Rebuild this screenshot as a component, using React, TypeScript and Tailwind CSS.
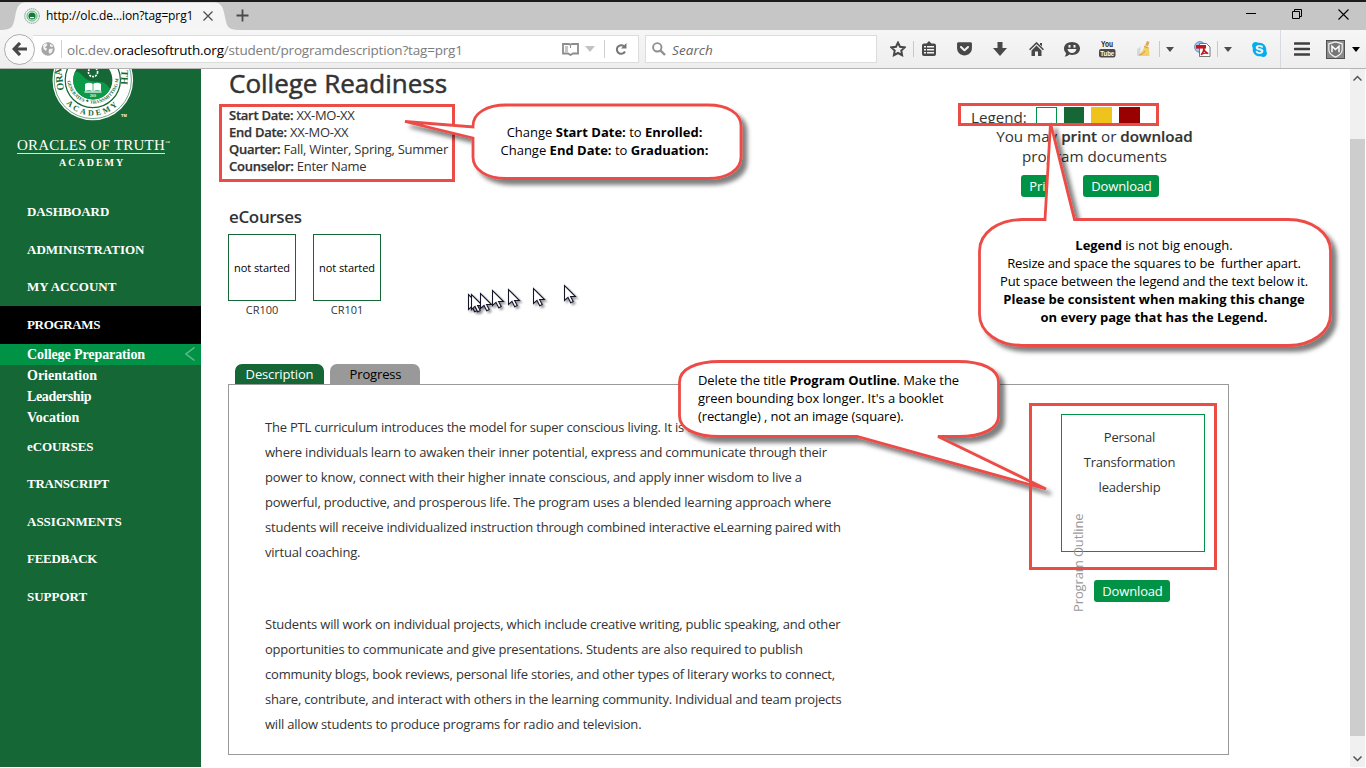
import React from "react";
import { FaGetPocket, FaSkype } from "react-icons/fa";

const RED = "#ec4c46";

function Seal() {
  return (
    <svg width="90" height="54" viewBox="48 69 90 54" className="block">
      <defs>
        <path id="arcBottom" d="M57.300 80 A35.500 35.500 0 0 0 128.300 80" />
        <path id="arcInner" d="M67.200 78 A25.600 25.600 0 0 0 118.400 78" />
      </defs>
      <circle cx="92.8" cy="80" r="40.3" fill="#fff" />
      <circle cx="92.8" cy="80" r="38.6" fill="none" stroke="#156735" strokeWidth=".6" />
      <circle cx="92.8" cy="80" r="27.6" fill="none" stroke="#156735" strokeWidth="1.2" />
      <circle cx="92.8" cy="80" r="19.6" fill="#156735" />
      <path d="M73.2 80A19.6 19.6 0 0 0 92.8 99.6 19.6 19.6 0 0 0 110 89C104 78 96 84 88 80 82 77 80 70 75 72A19.6 19.6 0 0 0 73.2 80Z" fill="#0a9a48" />
      <circle cx="93" cy="72" r="4.6" fill="none" stroke="#fff" strokeWidth="1.6" strokeDasharray="2 1" />
      <path d="M85 84q4-2.500 8 0 4-2.500 8 0v7q-4-1.500-8 .4-4-1.900-8-.4Z" fill="#fff" />
      <path d="M84.500 92h17" stroke="#fff" strokeWidth="1.200" />
      <path d="M93 84v7" stroke="#0a9a48" strokeWidth=".7" />
      <text x="93" y="96.500" fontSize="3" fill="#fff" textAnchor="middle" fontFamily="Liberation Serif">2010</text>
      <g fill="#156735" fontFamily="Liberation Serif, serif" fontWeight="700">
        <text fontSize="8"><textPath href="#arcBottom" startOffset="50%" textAnchor="middle" letterSpacing="2.600">ACADEMY</textPath></text>
        <text fontSize="10" transform="translate(64 90) rotate(-98)">ORA</text>
        <text fontSize="10" transform="translate(121.500 70) rotate(93)">TH</text>
        <text fontSize="4.600"><textPath href="#arcInner" startOffset="50%" textAnchor="middle">FERR GENERATES ✦ TRANSMITTING MEDIA</textPath></text>
      </g>
      <text x="121" y="116.500" fontSize="4" fill="#fff" fontWeight="700" fontFamily="Liberation Sans">TM</text>
    </svg>
  );
}

function Sep({ className }: { className: string }) {
  return <div className={"w-px shrink-0 bg-[#c4c9d4] " + className} />;
}

function Caret({ className, color = "#4d4d4d", w = 8 }: { className?: string; color?: string; w?: number }) {
  return (
    <svg width={w} height={w / 2 + 1} viewBox="0 0 8 5" preserveAspectRatio="none" className={"shrink-0 " + (className ?? "")}>
      <path d="M0 0h8L4 5Z" fill={color} />
    </svg>
  );
}

function TabBar() {
  return (
    <div className="flex h-[28px] shrink-0 bg-[#c6c6c6]">
      <div className="relative h-[28px] w-[236px]">
        <svg width="250" height="28" className="absolute top-0 left-0">
          <path d="M0 28C13 28 13 24 15 15 17 4 19 .5 26 .5H214C221 .5 223 4 225 15 227 24 227 28 240 28Z" fill="#f5f5f5" />
        </svg>
        <div className="relative flex h-[28px] items-center pl-[24px]">
          <svg width="16" height="16" viewBox="0 0 16 16">
            <circle cx="8" cy="8" r="7.300" fill="#e9f3ec" stroke="#68a47e" strokeWidth="1" strokeDasharray="1.500 .7" />
            <circle cx="8" cy="8" r="5" fill="none" stroke="#6cab84" strokeWidth="1" />
            <circle cx="8" cy="8" r="3.600" fill="#0f7a3a" />
            <path d="M6 9h4v1.200H6Z" fill="#fff" />
          </svg>
          <span className="ml-[6px] w-[148px] text-[12px] tracking-[-0.12px] whitespace-nowrap text-black">http://olc.de...ion?tag=prg1</span>
          <svg width="10" height="10" viewBox="0 0 10 10" className="ml-[9px]">
            <path d="M.5.5l9 9M9.500.5l-9 9" stroke="#4f4f4f" strokeWidth="1.300" />
          </svg>
        </div>
      </div>
      <svg width="13" height="13" viewBox="0 0 13 13" className="mt-[7px]">
        <path d="M6.500 .5v12M.5 6.500h12" stroke="#4a4a4a" strokeWidth="1.800" />
      </svg>
      <div className="mr-[17px] ml-auto flex pt-[7px] text-black">
        <svg width="10" height="10" className="mr-[36px]"><path d="M0 4.500h10" stroke="#000" /></svg>
        <svg width="10" height="10" className="mr-[36px]"><path d="M.5 2.500h7v7h-7ZM2.500 2.500v-2h7v7h-2" fill="none" stroke="#000" /></svg>
        <svg width="11" height="11"><path d="M.5.5l10 10M10.500.5l-10 10" stroke="#000" strokeWidth="1.100" /></svg>
      </div>
    </div>
  );
}

function ToolIcons() {
  return (
    <div className="flex h-full items-center">
      <svg width="16" height="16" viewBox="0 0 16 16" className="ml-[13px]">
        <path d="M8 1.600l2 4.200 4.700.6-3.400 3.200.8 4.600L8 12l-4.100 2.200.8-4.600L1.300 6.400 6 5.800Z" fill="none" stroke="#484848" strokeWidth="2" />
      </svg>
      <Sep className="ml-[7px] h-4" />
      <svg width="14" height="15" viewBox="0 0 14 15" className="mb-[2px] ml-[8px]">
        <path d="M4.500 2.500 7 0l2.500 2.500H12a2 2 0 0 1 2 2V13a2 2 0 0 1-2 2H2a2 2 0 0 1-2-2V4.500a2 2 0 0 1 2-2Z" fill="#484848" />
        <path d="M2 5h2v1.600H2ZM5 5h7v1.600H5ZM2 8h2v1.600H2ZM5 8h7v1.600H5ZM2 11h2v1.600H2ZM5 11h7v1.600H5Z" fill="#f4f4f4" />
      </svg>
      <FaGetPocket size={17} color="#484848" className="mb-px ml-[20px] shrink-0" />
      <svg width="14" height="14" viewBox="0 0 14 14" className="ml-[20px]"><path d="M4.500 0h5v6H14l-7 8-7-8h4.500Z" fill="#484848" /></svg>
      <svg width="15" height="14" viewBox="0 0 15 14" className="ml-[22px]">
        <path d="M11 1h2v3.500l-2-2Z" fill="#484848" />
        <path d="M7.500 3.600 12.500 8.500V14H9V9.500H6V14H2.500V8.500Z" fill="#484848" />
        <path d="M.5 7.800 7.500 1 14.500 7.800" fill="none" stroke="#484848" strokeWidth="1.600" />
      </svg>
      <svg width="16" height="15" viewBox="0 0 16 15" className="ml-[20px]">
        <path d="M8 0c4.600 0 8 2.800 8 6.500S12.600 13 8 13c-1 0-2-.1-2.800-.4C4 14 2 14.800.5 14.500 1.600 13.500 2 12.500 2 11 .7 9.800 0 8.300 0 6.500 0 2.800 3.400 0 8 0Z" fill="#484848" />
        <path d="M3.500 7h9c-.5 2.500-2.300 4-4.500 4S4 9.500 3.500 7Z" fill="#f4f4f4" />
        <rect x="4.500" y="3" width="2" height="2.600" fill="#f4f4f4" /><rect x="9.500" y="3" width="2" height="2.600" fill="#f4f4f4" />
      </svg>
      <svg width="17" height="18" viewBox="0 0 17 18" className="ml-[19px] overflow-visible">
        <rect x="0" y="9" width="16.500" height="8.500" rx="2" fill="#4a4a4a" />
        <text x="8" y="7.200" textAnchor="middle" fontSize="8.500" fontWeight="700" textLength="12" lengthAdjust="spacingAndGlyphs" fontFamily="Liberation Sans" fill="#222">You</text>
        <text x="8.200" y="15.800" textAnchor="middle" fontSize="7.500" fontWeight="700" textLength="14" lengthAdjust="spacingAndGlyphs" fontFamily="Liberation Sans" fill="#fff">Tube</text>
      </svg>
      <svg width="16" height="16" viewBox="0 0 16 16" className="ml-[20px]">
        <path d="M1 8q3-1 4-3l-1 8-3 2Z" fill="#d5dadd" />
        <path d="M11 0q2 0 2.500 1.500L12 5 9 4.500Z" fill="#e0a95c" />
        <path d="M8.500 4.500 12.500 6q1 5 1 9H1.500Q7 11 8.500 4.500Z" fill="#f2cf68" />
        <path d="M8 5.500l4.500 1.500M3 14q5-1 6-4" stroke="#d99845" fill="none" />
      </svg>
      <Sep className="ml-[7px] h-4" />
      <Caret className="ml-[6px]" />
      <svg width="17" height="16" viewBox="0 0 17 16" className="ml-[20px]">
        <circle cx="6" cy="6" r="5.400" fill="#a8c7ea" stroke="#5d8dca" />
        <path d="M5.500 2.500h7L16 6v9.500H5.500Z" fill="#fff" stroke="#555" strokeWidth=".8" />
        <rect x="2" y="4" width="10" height="3.600" fill="#c4161c" />
        <path d="M7 14q3-3 2.800-7M9.800 8q1.200 3.500 4.500 4.500-3.500-.8-6.500.6" fill="none" stroke="#c4161c" strokeWidth="1.300" />
      </svg>
      <Sep className="ml-[6px] h-4" />
      <Caret className="ml-[6px]" />
      <FaSkype size={17} color="#00aff0" className="ml-[19px] shrink-0" />
      <Sep className="ml-[12px] h-[38px] opacity-60" />
      <svg width="16" height="14" viewBox="0 0 16 14" className="ml-[13px]">
        <path d="M1 1.500h14M1 7h14M1 12.500h14" stroke="#3f3f3f" strokeWidth="2.600" strokeLinecap="round" />
      </svg>
      <svg width="19" height="19" viewBox="0 0 20 20" className="ml-[16px]">
        <rect x=".5" y=".5" width="19" height="19" fill="#8b8b8b" stroke="#4c4c4c" />
        <path d="M10 2l7 2v6q0 5-7 8-7-3-7-8V4Z" fill="#777" stroke="#f2f2f2" strokeWidth="1.300" />
        <path d="M6.300 13V6.500L10 10l3.700-3.500V13" fill="none" stroke="#fff" strokeWidth="1.600" />
      </svg>
      <Caret className="ml-[7px]" color="#000" />
    </div>
  );
}

function Toolbar() {
  return (
    <div className="flex h-[39px] shrink-0 items-center border-b border-[#b4b4b4] bg-linear-to-b from-[#f6f6f6] to-[#eeeeee]">
      <div className="relative ml-[4px] flex h-[31px] w-[31px] shrink-0 items-center justify-center rounded-full border border-[#adadad] bg-[#fafafa]">
        <svg width="16" height="14" viewBox="0 0 16 14"><path d="M8 1 2.200 7 8 13M2.500 7H15" fill="none" stroke="#474747" strokeWidth="3.200" /></svg>
      </div>
      <div className="-ml-[2px] flex h-[28px] w-[606px] items-center border border-l-0 border-[#dcdcdc] bg-white">
        <svg width="14" height="14" viewBox="0 0 14 14" className="ml-[8px]">
          <circle cx="7" cy="7" r="6.700" fill="#a5a5a5" />
          <path d="M2 3l3-2 1.500 2L4 5.500l2 1L5 9 2.500 7Zm7-1 2.500 1L12 5l-3-.5ZM8 7l4-.6L11 10l-2 2-1.500-2Z" fill="#f3f3f3" />
        </svg>
        <div className="ml-[6px] h-[18px] w-px bg-[#d0d0d0]" />
        <div className="ml-[5px] w-[481px] pt-[2px] text-[13.500px] whitespace-nowrap text-[#7c7c7c]">
          <span className="tracking-[-0.185px]">olc.dev.<span className="text-black">oraclesoftruth.org</span>/student/programdescription?tag=prg1</span>
        </div>
        <svg width="17" height="13" viewBox="0 0 17 13" className="ml-[14px]">
          <path d="M1 1h5.500q2 0 2 1.500Q8.500 1 10.500 1H16v9.500h-5L8.500 12 6 10.500H1Z" fill="none" stroke="#8c8c8c" strokeWidth="1.800" />
          <path d="M3 4h3M3 6h3M3 8h3M8.500 2.500V5" stroke="#8c8c8c" />
        </svg>
        <Caret color="#c2c2c2" w={10} className="ml-[6px]" />
        <div className="ml-[9px] h-[18px] w-px bg-[#d0d0d0]" />
        <svg width="12" height="12" viewBox="0 0 12 12" className="ml-[10px]">
          <path d="M9 3.200A4.300 4.300 0 1 0 10 8.500" fill="none" stroke="#767676" strokeWidth="2" />
          <path d="M6 5.500h5.500V0Z" fill="#767676" />
        </svg>
      </div>
      <div className="ml-[6px] flex h-[28px] w-[232px] items-center border border-[#dcdcdc] bg-white">
        <svg width="14" height="14" viewBox="0 0 14 14" className="ml-[6px]">
          <circle cx="5.300" cy="5.300" r="4.200" fill="none" stroke="#8f8f8f" strokeWidth="1.900" />
          <path d="M8.500 8.500 13 13" stroke="#8f8f8f" strokeWidth="2.400" />
        </svg>
        <span className="ml-[6px] pt-[2px] text-[13.500px] tracking-[0.080px] text-[#666] italic">Search</span>
      </div>
      <ToolIcons />
    </div>
  );
}

function NavItem({ label, active, track = "" }: { label: string; active?: boolean; track?: string }) {
  return (
    <div className={"flex h-[37.600px] shrink-0 items-center pl-[27px] text-[13px] " + track + (active ? " bg-black" : "")}>{label}</div>
  );
}

function Sidebar() {
  return (
    <div className="flex w-[201px] shrink-0 flex-col bg-[#156735] font-['Liberation_Serif',serif] font-bold text-white">
      <div className="ml-[48px] h-[54px]"><Seal /></div>
      <div className="mt-[14px] ml-[17px] flex h-[17px] w-[148px] items-center border-b border-[#d8e6dc] text-[15px] font-normal tracking-[0.200px] whitespace-nowrap">
        ORACLES OF TRUTH<sup className="text-[5px]">™</sup>
      </div>
      <div className="mt-[3px] ml-[59px] h-[12px] text-[10px] leading-[12px] tracking-[2px]">ACADEMY</div>
      <div className="mt-[24.200px] flex flex-col">
        <NavItem label="DASHBOARD" track="tracking-[-0.100px]" />
        <NavItem label="ADMINISTRATION" />
        <NavItem label="MY ACCOUNT" />
        <NavItem label="PROGRAMS" active track="tracking-[-0.350px]" />
        <div className="flex h-[21px] items-center justify-between bg-[#009245] pr-[6px] pl-[27px] text-[14px]">
          <span className="tracking-[-0.100px]">College Preparation</span>
          <svg width="10" height="14" viewBox="0 0 10 14"><path d="M9.500.5 1 7l8.500 6.500" fill="none" stroke="#62b888" strokeWidth="1.500" /></svg>
        </div>
        <div className="flex h-[21px] items-center pl-[27px] text-[14px]">Orientation</div>
        <div className="flex h-[21px] items-center pl-[27px] text-[14px] tracking-[-0.350px]">Leadership</div>
        <div className="flex h-[21px] items-center pl-[27px] text-[14px]">Vocation</div>
        <NavItem label="eCOURSES" track="tracking-[-0.100px]" />
        <NavItem label="TRANSCRIPT" track="tracking-[-0.250px]" />
        <NavItem label="ASSIGNMENTS" />
        <NavItem label="FEEDBACK" track="tracking-[-0.250px]" />
        <NavItem label="SUPPORT" />
      </div>
    </div>
  );
}

function Button({ children, className = "" }: { children: React.ReactNode; className?: string }) {
  return <div className={"flex h-[22px] items-center justify-center rounded-[3px] bg-[#009245] pt-[2px] pl-px text-[13px] tracking-[-0.150px] text-white " + className}>{children}</div>;
}

function Course({ code }: { code: string }) {
  return (
    <div className="w-[68px]">
      <div className="flex h-[67px] items-center justify-center border border-[#156735] pt-[2px] text-[11px] tracking-[-0.080px] text-black">not started</div>
      <div className="mt-px h-[16px] text-center text-[11px] leading-[16px]">{code}</div>
    </div>
  );
}

const PARA_ONE = [
  "The PTL curriculum introduces the model for super conscious living. It is a place",
  "where individuals learn to awaken their inner potential, express and communicate through their",
  "power to know, connect with their higher innate conscious, and apply inner wisdom to live a",
  "powerful, productive, and prosperous life. The program uses a blended learning approach where",
  "students will receive individualized instruction through combined interactive eLearning paired with",
  "virtual coaching.",
];
const PARA_TWO = [
  "Students will work on individual projects, which include creative writing, public speaking, and other",
  "opportunities to communicate and give presentations. Students are also required to publish",
  "community blogs, book reviews, personal life stories, and other types of literary works to connect,",
  "share, contribute, and interact with others in the learning community. Individual and team projects",
  "will allow students to produce programs for radio and television.",
];

function Paragraph({ lines }: { lines: string[] }) {
  return (
    <p className="text-[13px] leading-[25px] tracking-[-0.210px] whitespace-nowrap">
      {lines.map((l) => <span key={l} className="block">{l}</span>)}
    </p>
  );
}

function Content() {
  return (
    <div className="flex min-w-0 flex-1 flex-col pl-[27px] text-[#333]">
      <div className="flex h-[295px] shrink-0">
        <div className="w-[732px]">
          <h1 className="h-[37.500px] pl-px text-[26px] leading-[29px] font-medium whitespace-nowrap [-webkit-text-stroke:0.500px_#333]">College Readiness</h1>
          <div className="pl-px text-[13px] leading-[17px] tracking-[-0.260px]">
            <div><b className="font-semibold [-webkit-text-stroke:0.250px_#333]">Start Date:</b> XX-MO-XX</div>
            <div><b className="font-semibold [-webkit-text-stroke:0.250px_#333]">End Date:</b> XX-MO-XX</div>
            <div><b className="font-semibold [-webkit-text-stroke:0.250px_#333]">Quarter:</b> Fall, Winter, Spring, Summer</div>
            <div><b className="font-semibold [-webkit-text-stroke:0.250px_#333]">Counselor:</b> Enter Name</div>
          </div>
          <h2 className="mt-[30px] h-[29.500px] pl-px text-[17px] leading-[24px] font-semibold tracking-[-0.350px]">eCourses</h2>
          <div className="flex gap-[17px]">
            <Course code="CR100" />
            <Course code="CR101" />
          </div>
        </div>
        <div className="w-[268px] pt-[38px]">
          <div className="flex h-[19px] overflow-hidden pl-[11px]">
            <span className="w-[65px] text-[15.200px] leading-[21px]">Legend:</span>
            <div className="h-[20px] w-[21px] border border-[#009245]" />
            <div className="ml-[7px] h-[20px] w-[20px] bg-[#156735]" />
            <div className="ml-[7px] h-[20px] w-[21px] bg-[#eec41c]" />
            <div className="ml-[7px] h-[20px] w-[21px] bg-[#990000]" />
          </div>
          <div className="pl-px text-center text-[15.200px] leading-[20px] whitespace-nowrap">
            You may <b className="font-semibold [-webkit-text-stroke:0.200px_#333]">print</b> or <b className="font-semibold [-webkit-text-stroke:0.200px_#333]">download</b><br />program documents
          </div>
          <div className="mt-[9px] flex gap-[18px] pl-[61px]">
            <Button className="w-[44px]">Print</Button>
            <Button className="w-[76px]">Download</Button>
          </div>
        </div>
      </div>
      <div className="flex h-[20px] shrink-0 gap-[6px] pl-[7px] text-[13px] tracking-[-0.150px]">
        <div className="flex w-[89px] items-center justify-center rounded-t-[7px] bg-[#156735] pt-[2px] text-white">Description</div>
        <div className="flex w-[90px] items-center justify-center rounded-t-[7px] bg-[#999] pt-[2px] pl-px text-black">Progress</div>
      </div>
      <div className="flex h-[371px] w-[1001px] shrink-0 border border-[#999] pl-[36px]">
        <div className="flex w-[796px] flex-col gap-[47px] pt-[30px]">
          <Paragraph lines={PARA_ONE} />
          <Paragraph lines={PARA_TWO} />
        </div>
        <div className="relative w-[144px] pt-[29px]">
          <div className="h-[138px] border border-[#009245] pt-[10px] pr-[7px] text-center text-[13px] leading-[25px] tracking-[-0.200px]">
            Personal<br />Transformation<br />leadership
          </div>
          <Button className="mt-[28px] ml-[33px] w-[76px]">Download</Button>
          <div className="absolute top-[128px] left-[8px] flex h-[99px] w-[20px] items-center justify-center">
            <span className="-rotate-90 text-[13px] tracking-[-0.150px] whitespace-nowrap text-[#999]">Program Outline</span>
          </div>
        </div>
      </div>
    </div>
  );
}

function Scrollbar() {
  return (
    <div className="mr-px flex w-[15px] shrink-0 flex-col items-center bg-[#f0f0f0]">
      <svg width="9" height="6" viewBox="0 0 9 6" className="mt-[6px]"><path d="M.5 5.500l4-4 4 4" fill="none" stroke="#555" strokeWidth="1.500" /></svg>
      <div className="mt-[58px] h-[597px] w-full bg-[#cdcdcd]" />
      <svg width="9" height="6" viewBox="0 0 9 6" className="mt-[20px]"><path d="M.5.5l4 4 4-4" fill="none" stroke="#555" strokeWidth="1.500" /></svg>
    </div>
  );
}

const CURSORS = [[468, 294], [471, 294], [480, 293], [492, 290], [508, 289], [533, 288], [564, 285]];

function Annotations() {
  return (
    <div className="pointer-events-none absolute inset-0">
      <svg width="1366" height="768" className="absolute inset-0">
        <defs>
          <filter id="drop" x="-10%" y="-20%" width="125%" height="150%">
            <feDropShadow dx="5" dy="5" stdDeviation="2" floodColor="#000" floodOpacity=".5" />
          </filter>
          <filter id="soft" x="-30%" y="-30%" width="190%" height="190%">
            <feDropShadow dx="2" dy="2" stdDeviation="1" floodColor="#000" floodOpacity=".4" />
          </filter>
        </defs>
        <g fill="none" stroke={RED} strokeWidth="3">
          <rect x="220.500" y="105.500" width="233" height="75" />
          <rect x="959.500" y="104.500" width="198" height="20" />
        </g>
        <g fill="#fff" stroke={RED} strokeWidth="2.800">
          <path filter="url(#drop)" d="M506 105H708C727 105 741 113 741 126V157C741 170 727 178.500 708 178.500H506C487 178.500 473 170 473 157V138L405 121.500 473 127V126C473 113 487 105 506 105Z" />
          <path filter="url(#drop)" d="M1022 219.500H1045L1050.500 123 1074.500 219.500H1288C1312 219.500 1330.500 233 1330.500 251V314C1330.500 332 1312 345.500 1288 345.500H1022C998 345.500 979.500 332 979.500 314V251C979.500 233 998 219.500 1022 219.500Z" />
          <path filter="url(#drop)" d="M720 361.500H958C982 361.500 998.500 369 998.500 382V416C998.500 429 982 436.500 958 436.500H938L1046 489 857 436.500H720C696 436.500 679.500 429 679.500 416V382C679.500 369 696 361.500 720 361.500Z" />
        </g>
        <rect x="1030.500" y="404.500" width="185" height="164" fill="none" stroke={RED} strokeWidth="3" />
        {CURSORS.map(([x, y]) => (
          <path key={x} filter="url(#soft)" transform={`translate(${x} ${y})`} d="M.5.500V15.500L4 12.300l2.700 5.500 2.500-1.300L6.600 11.500H11.500Z" fill="#fff" stroke="#15152b" strokeWidth="1.100" />
        ))}
      </svg>
      <div className="absolute top-[123px] left-[470.500px] w-[268px] text-center text-[13px] leading-[18px] whitespace-nowrap text-black">
        Change <b>Start Date:</b> to <b>Enrolled:</b><br />Change <b>End Date:</b> to <b>Graduation:</b>
      </div>
      <div className="absolute top-[236px] left-[980px] w-[348px] text-center text-[13px] leading-[18px] whitespace-pre text-black">
        <div className="tracking-[-0.030px]"><b>Legend</b> is not big enough.</div>
        <div className="tracking-[-0.150px]">{"Resize and space the squares to be  further apart."}</div>
        <div className="tracking-[-0.100px]">Put space between the legend and the text below it.</div>
        <div className="font-bold">Please be consistent when making this change</div>
        <div className="font-bold">on every page that has the Legend.</div>
      </div>
      <div className="absolute top-[371px] left-[698px] text-[13px] leading-[18px] tracking-[-0.060px] whitespace-nowrap text-black">
        Delete the title <b>Program Outline</b>. Make the<br />green bounding box longer. It's a booklet<br /><span className="tracking-[-0.120px]">(rectangle) , not an image (square).</span>
      </div>
    </div>
  );
}

export default function App() {
  return (
    <div className="relative flex h-[768px] w-[1366px] flex-col overflow-hidden bg-white font-['Open_Sans','Noto_Sans',sans-serif]">
      <div className="h-[2px] shrink-0 bg-[#1c1a1a]" />
      <TabBar />
      <Toolbar />
      <div className="flex h-[698px] shrink-0 overflow-hidden">
        <Sidebar />
        <Content />
        <Scrollbar />
      </div>
      <Annotations />
    </div>
  );
}
